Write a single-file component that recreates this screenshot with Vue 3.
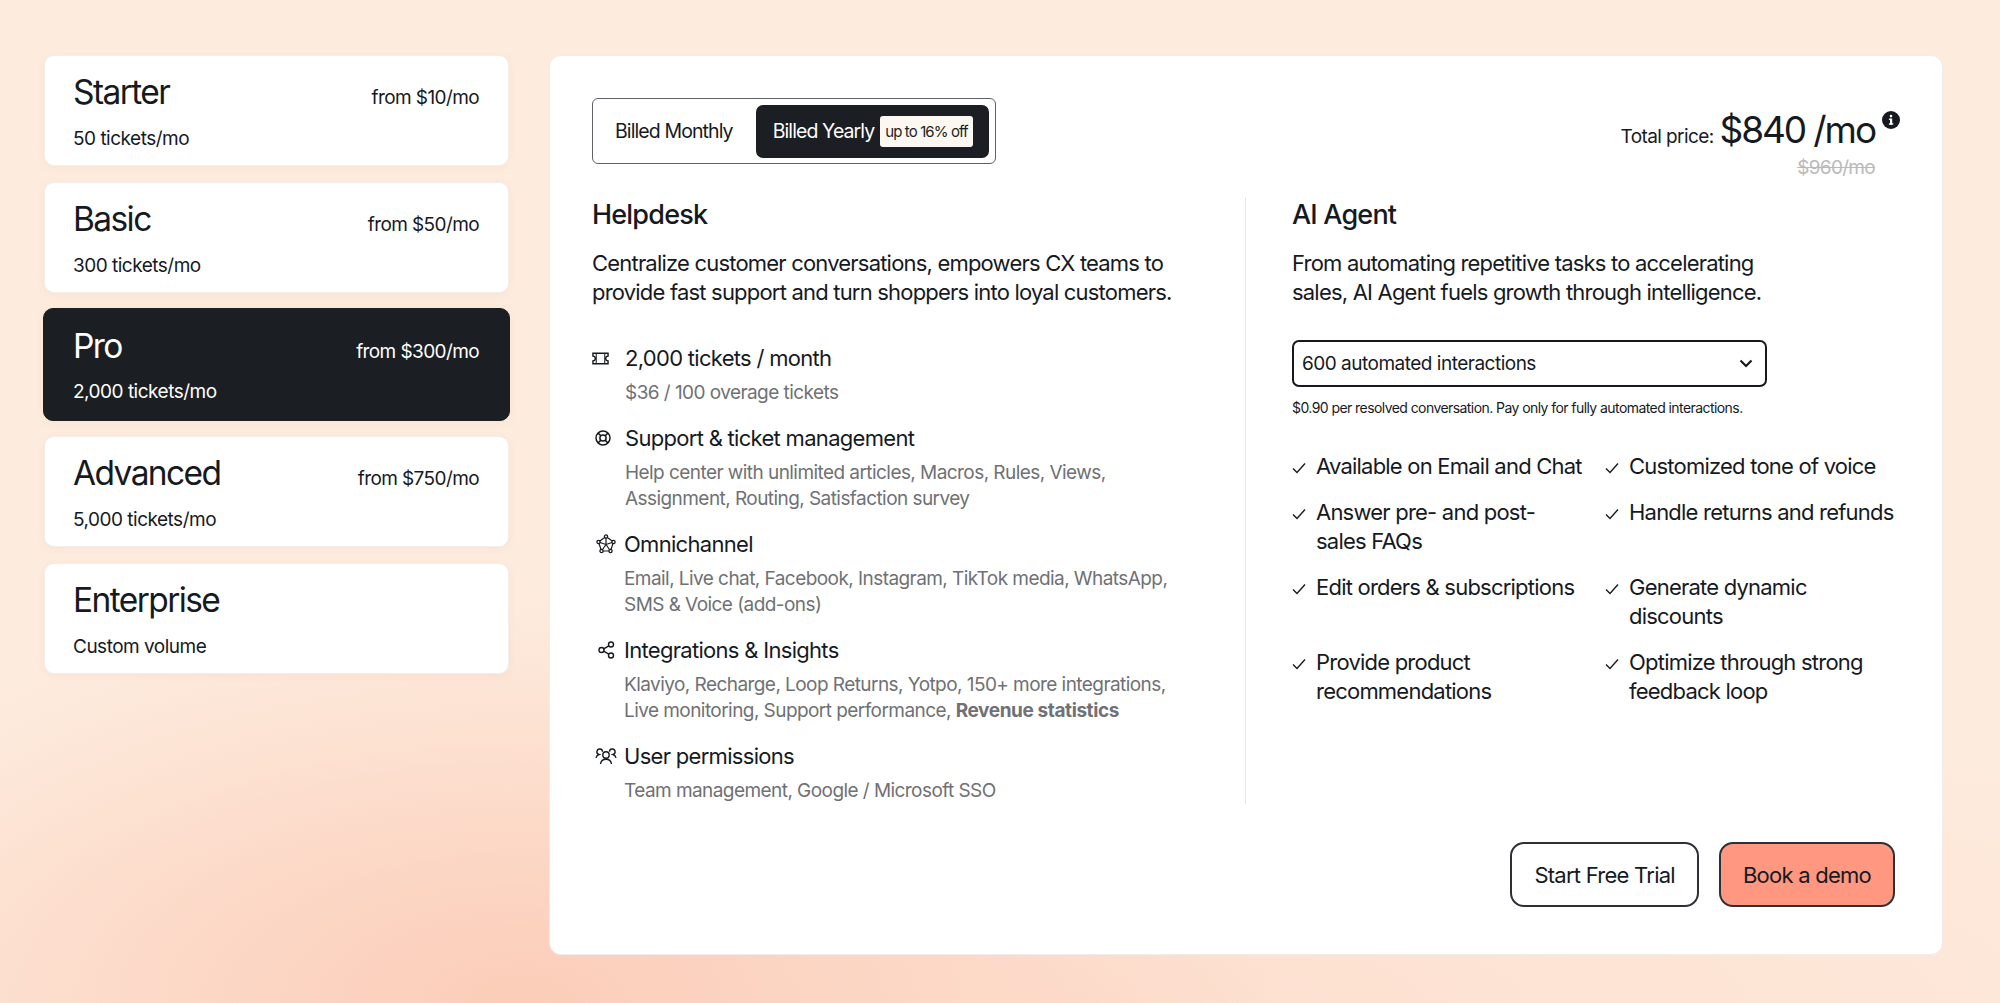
<template>
  <div class="page">
    <aside class="plans">
      <div v-for="plan in plans" :key="plan.name" class="plan" :class="{ active: plan.active }">
        <div class="plan-top">
          <span class="plan-name">{{ plan.name }}</span>
          <span class="plan-price">{{ plan.price }}</span>
        </div>
        <div class="plan-volume">{{ plan.volume }}</div>
      </div>
    </aside>

    <main class="card">
      <div class="card-head">
        <div class="billing">
          <div class="billing-opt">Billed Monthly</div>
          <div class="billing-opt selected">
            Billed Yearly
            <span class="off">up to 16% off</span>
          </div>
        </div>
        <div class="total">
          <div class="total-line">
            <span class="total-label">Total price:</span>
            <span class="total-value">$840 /mo</span>
            <svg class="info" viewBox="0 0 18 18" width="18" height="18">
              <circle cx="9" cy="9" r="9" fill="#161a1f" />
              <rect x="8" y="7.600" width="2.200" height="6" fill="#fff" />
              <rect x="6.900" y="7.600" width="2" height="1.300" fill="#fff" />
              <rect x="6.900" y="12.400" width="4.400" height="1.300" fill="#fff" />
              <circle cx="9" cy="5.100" r="1.300" fill="#fff" />
            </svg>
          </div>
          <div class="total-old">$960/mo</div>
        </div>
      </div>

      <div class="cols">
        <section class="col-left">
          <h2>Helpdesk</h2>
          <p class="lead">Centralize customer conversations, empowers CX teams to provide fast support and turn shoppers into loyal customers.</p>

          <ul class="features">
            <li>
              <div class="feature-title">
                <svg class="ficon ticket" viewBox="0 0 18 13" fill="none" stroke="#161a1f" stroke-width="1.500">
                  <path d="M1 1h16v3a2.500 2.500 0 0 0 0 5v3H1V9a2.500 2.500 0 0 0 0-5z" />
                  <path d="M4.500 1v11M13.500 1v11" stroke-width="1.100" />
                </svg>
                <span>2,000 tickets / month</span>
              </div>
              <div class="feature-sub wide">$36 / 100 overage tickets</div>
            </li>
            <li>
              <div class="feature-title">
                <svg class="ficon ring" viewBox="0 0 16 16" fill="none" stroke="#161a1f" stroke-width="1.500">
                  <circle cx="8" cy="8" r="7" />
                  <circle cx="8" cy="8" r="3.100" />
                  <path d="M3.100 3.100l2.700 2.700M12.900 3.100l-2.700 2.700M3.100 12.900l2.700-2.700M12.900 12.900l-2.700-2.700" />
                </svg>
                <span>Support &amp; ticket management</span>
              </div>
              <div class="feature-sub wide">Help center with unlimited articles, Macros, Rules, Views, Assignment, Routing, Satisfaction survey</div>
            </li>
            <li>
              <div class="feature-title">
                <svg class="ficon" viewBox="0 0 20 20" fill="none" stroke="#161a1f" stroke-width="1.200">
                  <path d="M10 2.500L17.500 8 14.500 17H5.500L2.500 8z" />
                  <path d="M10 2.500L10 10.500M17.500 8L10 10.500M14.500 17L10 10.500M5.500 17L10 10.500M2.500 8L10 10.500" />
                  <g fill="#fff" stroke-width="1.300">
                    <circle cx="10" cy="2.500" r="1.600" />
                    <circle cx="17.500" cy="8" r="1.600" />
                    <circle cx="14.500" cy="17" r="1.600" />
                    <circle cx="5.500" cy="17" r="1.600" />
                    <circle cx="2.500" cy="8" r="1.600" />
                  </g>
                </svg>
                <span>Omnichannel</span>
              </div>
              <div class="feature-sub">Email, Live chat, Facebook, Instagram, TikTok media, WhatsApp, SMS &amp; Voice (add-ons)</div>
            </li>
            <li>
              <div class="feature-title">
                <svg class="ficon" viewBox="0 0 20 20" fill="none" stroke="#161a1f" stroke-width="1.400">
                  <circle cx="15" cy="4.500" r="2.500" />
                  <circle cx="5.500" cy="10" r="2.500" />
                  <circle cx="15" cy="15.500" r="2.500" />
                  <path d="M7.700 8.800l5.100-3M7.700 11.200l5.100 3" />
                </svg>
                <span>Integrations &amp; Insights</span>
              </div>
              <div class="feature-sub">Klaviyo, Recharge, Loop Returns, Yotpo, 150+ more integrations, Live monitoring, Support performance, <b>Revenue statistics</b></div>
            </li>
            <li>
              <div class="feature-title">
                <svg class="ficon users" viewBox="0 0 22 18" fill="none" stroke="#161a1f" stroke-width="1.400">
                  <circle cx="11" cy="8" r="3.200" />
                  <path d="M5.500 17c.5-3 2.700-4.700 5.500-4.700S16 14 16.500 17" />
                  <path d="M7.500 4.800A2.800 2.800 0 1 0 4 7.500C2.400 8 1.300 9.300 1 11" />
                  <path d="M14.500 4.800A2.800 2.800 0 1 1 18 7.500C19.600 8 20.700 9.300 21 11" />
                </svg>
                <span>User permissions</span>
              </div>
              <div class="feature-sub">Team management, Google / Microsoft SSO</div>
            </li>
          </ul>
        </section>

        <section class="col-right">
          <h2>AI Agent</h2>
          <p class="lead narrow">From automating repetitive tasks to accelerating sales, AI Agent fuels growth through intelligence.</p>

          <div class="select">
            <span>600 automated interactions</span>
            <svg viewBox="0 0 14 9" width="14" height="9" fill="none" stroke="#161a1f" stroke-width="2.200">
              <path d="M1.500 1.500L7 7l5.500-5.500" />
            </svg>
          </div>
          <p class="select-note">$0.90 per resolved conversation. Pay only for fully automated interactions.</p>

          <ul class="checks">
            <li v-for="item in agentFeatures" :key="item">
              <svg class="check" viewBox="0 0 14 12" width="14" height="12" fill="none" stroke="#161a1f" stroke-width="1.400">
                <path d="M1 6.500L5 10.500 13 1.500" />
              </svg>
              <span>{{ item }}</span>
            </li>
          </ul>
        </section>
      </div>

      <div class="actions">
        <button class="btn">Start Free Trial</button>
        <button class="btn primary">Book a demo</button>
      </div>
    </main>
  </div>
</template>

<script setup>
const plans = [
  { name: 'Starter', price: 'from $10/mo', volume: '50 tickets/mo' },
  { name: 'Basic', price: 'from $50/mo', volume: '300 tickets/mo' },
  { name: 'Pro', price: 'from $300/mo', volume: '2,000 tickets/mo', active: true },
  { name: 'Advanced', price: 'from $750/mo', volume: '5,000 tickets/mo' },
  { name: 'Enterprise', price: '', volume: 'Custom volume' },
]

const agentFeatures = [
  'Available on Email and Chat',
  'Customized tone of voice',
  'Answer pre- and post-sales FAQs',
  'Handle returns and refunds',
  'Edit orders & subscriptions',
  'Generate dynamic discounts',
  'Provide product recommendations',
  'Optimize through strong feedback loop',
]
</script>

<style>
html, body { margin: 0; }
</style>

<style scoped>
* { box-sizing: border-box; }

.page {
  width: 2000px;
  height: 1003px;
  overflow: hidden;
  display: flex;
  align-items: flex-start;
  gap: 40px;
  padding: 55px 57px 0 44px;
  font-family: Inter, "Liberation Sans", sans-serif;
  color: #161a1f;
  background: radial-gradient(ellipse 800px 400px at 520px 1003px, #fbcdb9 0%, rgba(251, 205, 185, 0) 100%),
    radial-gradient(ellipse 1400px 300px at 1100px 1003px, #fde0d0 0%, rgba(253, 224, 208, 0) 100%),
    #fdebdd;
}

.plans {
  width: 465px;
  flex-shrink: 0;
  display: flex;
  flex-direction: column;
  gap: 16px;
}

.plan {
  height: 111px;
  padding: 15px 29px 0 28px;
  background: #fff;
  border: 1px solid #f3eeea;
  border-radius: 10px;
  box-shadow: 0 2px 8px rgba(180, 120, 90, 0.06);
}

.plan.active {
  height: 113px;
  margin: -1px;
  padding: 16px 30px 0 29px;
  background: #1b1e23;
  border-color: #1b1e23;
  color: #fff;
}

.plan-top {
  display: flex;
  justify-content: space-between;
  align-items: flex-end;
}

.plan-name {
  font-size: 33.500px;
  line-height: 42px;
  letter-spacing: -1.600px;
}

.plan-price {
  margin-bottom: 1px;
  font-size: 19px;
  line-height: 28px;
  letter-spacing: -0.600px;
}

.plan-volume {
  margin-top: 13px;
  font-size: 19px;
  line-height: 26px;
  letter-spacing: -0.500px;
}

.active .plan-volume {
  margin-top: 12px;
}

.card {
  width: 1394px;
  height: 900px;
  flex-shrink: 0;
  display: flex;
  flex-direction: column;
  padding: 42px 42px 48px;
  background: #fff;
  border: 1px solid #f1ece8;
  border-radius: 12px;
}

.card-head {
  display: flex;
  justify-content: space-between;
  align-items: flex-start;
  height: 66px;
}

.billing {
  display: flex;
  align-items: center;
  gap: 5px;
  width: 404px;
  height: 66px;
  padding: 5px 6px 5px 4px;
  border: 1px solid #5f6368;
  border-radius: 6px;
}

.billing-opt {
  display: flex;
  align-items: center;
  padding: 0 18px;
  height: 53px;
  font-size: 19.500px;
  letter-spacing: -0.900px;
  white-space: nowrap;
}

.billing-opt.selected {
  flex: none;
  gap: 6px;
  width: 233px;
  padding: 0 16px 0 17px;
  background: #1b1e23;
  color: #fff;
  border-radius: 7px;
}

.off {
  display: inline-block;
  width: 93px;
  height: 31px;
  text-align: center;
  background: #fdf7f1;
  color: #1b1e23;
  border-radius: 3px;
  font-size: 15px;
  line-height: 31px;
  letter-spacing: -0.900px;
}

.total {
  text-align: right;
}

.total-line {
  position: relative;
  display: flex;
  align-items: baseline;
  gap: 6px;
  padding-right: 25px;
  margin-top: 8px;
}

.total-label {
  font-size: 19px;
  letter-spacing: -0.600px;
}

.total-value {
  font-size: 37px;
  line-height: 48px;
  letter-spacing: -2.100px;
}

.info {
  position: absolute;
  right: 0;
  top: 5px;
}

.total-old {
  padding-right: 25px;
  margin-top: 2px;
  font-size: 19px;
  line-height: 24px;
  letter-spacing: -0.700px;
  color: #b9b9b9;
  text-decoration: line-through;
}

.cols {
  display: grid;
  grid-template-columns: 654px 1fr;
  margin-top: 33px;
  height: 606px;
}

.col-left {
  padding-right: 40px;
  border-right: 1px solid #e8e8e8;
}

.col-right {
  padding-left: 46px;
}

h2 {
  margin: 0;
  font-size: 27px;
  line-height: 36px;
  font-weight: 500;
  letter-spacing: -0.800px;
}

.lead {
  margin: 16px 0 0;
  font-size: 22px;
  line-height: 29px;
  letter-spacing: -0.800px;
}

.lead.narrow {
  max-width: 500px;
}

.features {
  list-style: none;
  margin: 36px 0 0;
  padding: 0;
  display: flex;
  flex-direction: column;
  gap: 17px;
}

.feature-title {
  display: flex;
  align-items: center;
  font-size: 22px;
  line-height: 30px;
  letter-spacing: -0.700px;
}

.ficon {
  width: 20px;
  height: 20px;
  margin-left: 4px;
  margin-right: 8px;
  flex-shrink: 0;
}

.ficon.ticket {
  width: 17px;
  height: 13px;
  margin-left: 0;
  margin-right: 16px;
}

.ficon.ring {
  width: 16px;
  height: 16px;
  margin-left: 3px;
  margin-right: 14px;
}

.ficon.users {
  width: 22px;
  height: 18px;
  margin-left: 3px;
  margin-right: 7px;
}

.feature-sub {
  margin-top: 7px;
  padding-left: 32px;
  max-width: 592px;
  font-size: 19px;
  line-height: 26px;
  letter-spacing: -0.560px;
  color: #6f7175;
}

.feature-sub b {
  letter-spacing: -0.400px;
}

.feature-sub.wide {
  padding-left: 33px;
}

.select {
  display: flex;
  justify-content: space-between;
  align-items: center;
  width: 475px;
  height: 47px;
  margin-top: 33px;
  padding: 0 12px 0 8px;
  border: 2px solid #161a1f;
  border-radius: 7px;
  font-size: 19px;
  letter-spacing: -0.500px;
}

.select-note {
  margin: 11px 0 0;
  font-size: 14px;
  line-height: 20px;
  letter-spacing: -0.570px;
}

.checks {
  list-style: none;
  margin: 34px 0 0;
  padding: 0;
  display: grid;
  grid-template-columns: 313px 1fr;
  row-gap: 17px;
}

.checks li {
  display: flex;
  align-items: flex-start;
  padding-right: 21px;
  font-size: 22px;
  line-height: 29px;
  letter-spacing: -0.780px;
}

.checks li:nth-child(even) {
  padding-right: 0;
}

.check {
  flex-shrink: 0;
  margin-top: 10px;
  margin-right: 10px;
}

.actions {
  display: flex;
  justify-content: flex-end;
  gap: 20px;
  margin-top: 39px;
  padding-right: 5px;
}

.btn {
  height: 65px;
  padding: 0 22px;
  font: inherit;
  font-size: 22px;
  letter-spacing: -0.750px;
  color: #161a1f;
  background: #fff;
  border: 2px solid #2d3136;
  border-radius: 14px;
}

.btn.primary {
  background: #ff9781;
}
</style>
